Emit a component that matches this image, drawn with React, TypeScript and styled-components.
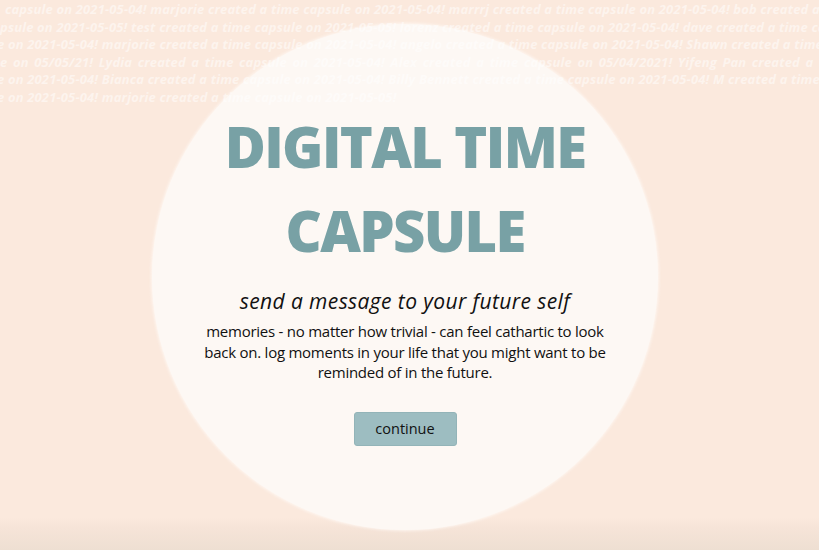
import React from "react";
import styled, { createGlobalStyle } from "styled-components";

const GlobalStyle = createGlobalStyle`
  html, body { margin: 0; padding: 0; }
  body { background: #fbe9dd; font-family: "Open Sans", "Noto Sans", sans-serif; }
`;

const Page = styled.div`
  position: relative;
  width: 100%;
  height: 550px;
  overflow: hidden;
  background: linear-gradient(to bottom, #fbe9dd 0, #fbe9dd 94%, #f6e4d8 96%, #eedfd2 100%);
`;

const Ticker = styled.div`
  position: absolute;
  top: 0;
  left: 0;
  right: 0;
  z-index: 2;
  pointer-events: none;
  padding-top: 1px;
`;

const TickerLine = styled.div<{ $offset: number; $spacing?: number }>`
  white-space: nowrap;
  font-family: "Open Sans", sans-serif;
  font-style: italic;
  font-weight: 700;
  font-size: 13px;
  letter-spacing: 0.15px;
  line-height: 17.5px;
  color: rgba(255, 255, 255, 0.5);
  margin-left: ${(p) => p.$offset}px;
  word-spacing: ${(p) => p.$spacing ?? 0}px;
`;

const Stage = styled.main`
  display: flex;
  justify-content: center;
  padding: 24px 9px 0 0;
`;

const Circle = styled.section`
  width: 506px;
  height: 506px;
  border-radius: 50%;
  background: #fdf8f4;
  box-shadow: 0 0 3px 1px rgba(255, 250, 246, 0.8);
  display: flex;
  flex-direction: column;
  align-items: center;
  padding-top: 80px;
  box-sizing: border-box;
`;

const Title = styled.h1`
  margin: 0;
  font-family: "Open Sans", sans-serif;
  font-weight: 800;
  font-size: 56px;
  line-height: 84px;
  color: #78a1a5;
  text-align: center;
  letter-spacing: -1.6px;
`;

const Subtitle = styled.h2`
  margin: 15px 0 0;
  font-family: "Open Sans", sans-serif;
  font-style: italic;
  font-weight: 500;
  font-size: 21px;
  letter-spacing: 0.4px;
  line-height: 28px;
  color: #111;
`;

const Blurb = styled.p`
  margin: 6px 0 0;
  width: 420px;
  font-family: "Open Sans", sans-serif;
  font-size: 15px;
  letter-spacing: -0.25px;
  line-height: 20.5px;
  text-align: center;
  color: #111;
`;

const Button = styled.button`
  margin-top: 29px;
  width: 103px;
  height: 34px;
  background: #9dbdc1;
  border: 1px solid #93b4b8;
  border-radius: 3px;
  font-family: "Open Sans", sans-serif;
  font-size: 14.5px;
  color: #111;
  cursor: pointer;
`;

const lines: { text: string; offset: number; spacing?: number }[] = [
  { text: "capsule on 2021-05-04! marjorie created a time capsule on 2021-05-04! marrrj created a time capsule on 2021-05-04! bob created a time capsule on", offset: 5 },
  { text: "psule on 2021-05-05! test created a time capsule on 2021-05-05! lorenz created a time capsule on 2021-05-04! dave created a time capsule on", offset: 0 },
  { text: "e on 2021-05-04! marjorie created a time capsule on 2021-05-04! angelo created a time capsule on 2021-05-04! Shawn created a time capsule on", offset: -3 },
  { text: "e on 05/05/21! Lydia created a time capsule on 2021-05-04! Alex created a time capsule on 05/04/2021! Yifeng Pan created a time capsule on", offset: 0, spacing: 2 },
  { text: "e on 2021-05-04! Bianca created a time capsule on 2021-05-04! Billy Bennett created a time capsule on 2021-05-04! M created a time capsule on", offset: -3 },
  { text: "e on 2021-05-04! marjorie created a time capsule on 2021-05-05!", offset: -3 },
];

export default function App() {
  return (
    <>
      <GlobalStyle />
      <Page>
        <Ticker>
          {lines.map((l, i) => (
            <TickerLine key={i} $offset={l.offset} $spacing={l.spacing}>
              {l.text}
            </TickerLine>
          ))}
        </Ticker>
        <Stage>
          <Circle>
            <Title>
              DIGITAL TIME
              <br />
              CAPSULE
            </Title>
            <Subtitle>send a message to your future self</Subtitle>
            <Blurb>
              memories - no matter how trivial - can feel cathartic to look back on. log moments in your life that you
              might want to be reminded of in the future.
            </Blurb>
            <Button>continue</Button>
          </Circle>
        </Stage>
      </Page>
    </>
  );
}
